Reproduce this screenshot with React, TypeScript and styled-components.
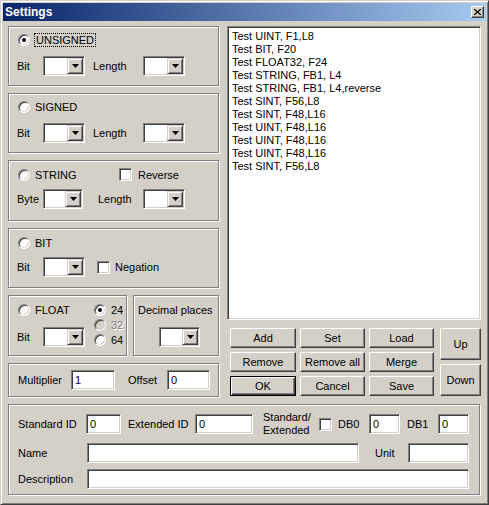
import React from "react";
import styled, { createGlobalStyle } from "styled-components";

const FACE = "#d4d0c8";
const SHADOW = "#808080";
const DARK = "#404040";

const GlobalStyle = createGlobalStyle`
  html, body {
    margin: 0;
    padding: 0;
    background: ${FACE};
  }
  body {
    font-family: "Liberation Sans", Arial, sans-serif;
    font-size: 11px;
    color: #000;
  }
  * {
    box-sizing: border-box;
  }
`;

const items = [
  "Test UINT, F1,L8",
  "Test BIT, F20",
  "Test FLOAT32, F24",
  "Test STRING, FB1, L4",
  "Test STRING, FB1, L4,reverse",
  "Test SINT, F56,L8",
  "Test SINT, F48,L16",
  "Test UINT, F48,L16",
  "Test UINT, F48,L16",
  "Test UINT, F48,L16",
  "Test SINT, F56,L8",
];

const Window = styled.div`
  width: 489px;
  height: 505px;
  background: ${FACE};
  border: 1px solid;
  border-color: ${FACE} ${DARK} ${DARK} ${FACE};
  box-shadow: inset 1px 1px #fff, inset -1px -1px ${SHADOW};
  padding: 2px;
  display: flex;
  flex-direction: column;
`;

const TitleBar = styled.div`
  height: 18px;
  flex-shrink: 0;
  background: linear-gradient(to right, #0a246a, #a6caf0);
  display: flex;
  align-items: center;
  justify-content: space-between;
  padding: 0 2px 0 2px;
  color: #fff;
  font-weight: bold;
  font-size: 12px;
`;

const CloseButton = styled.div`
  width: 13px;
  height: 12px;
  background: ${FACE};
  border: 1px solid;
  border-color: #fff ${DARK} ${DARK} #fff;
  box-shadow: inset -1px -1px ${SHADOW};
  display: flex;
  align-items: center;
  justify-content: center;
`;

const Body = styled.div`
  flex: 1;
  padding: 5px 5px 7px 5px;
  display: flex;
  flex-direction: column;
  gap: 7px;
`;

const TopRow = styled.div`
  display: flex;
  gap: 8px;
  height: 371px;
`;

const LeftCol = styled.div`
  width: 211px;
  display: flex;
  flex-direction: column;
  gap: 7px;
`;

const RightCol = styled.div`
  width: 254px;
  display: flex;
  flex-direction: column;
  gap: 8px;
`;

const Group = styled.div<{ $h: number; $w?: number }>`
  height: ${(p) => p.$h}px;
  width: ${(p) => (p.$w ? `${p.$w}px` : "auto")};
  flex-shrink: 0;
  border: 1px solid ${SHADOW};
  box-shadow: inset 1px 1px #fff, 1px 1px #fff;
  padding: 6px 0 0 8px;
  display: flex;
  flex-direction: column;
`;

const GroupRow = styled.div<{ $h?: number; $mt?: number }>`
  display: flex;
  align-items: center;
  height: ${(p) => p.$h ?? 14}px;
  margin-top: ${(p) => p.$mt ?? 0}px;
`;

const HRow = styled.div<{ $gap?: number }>`
  display: flex;
  gap: ${(p) => p.$gap ?? 0}px;
`;

const Label = styled.span<{ $w?: number; $ml?: number; $disabled?: boolean }>`
  display: inline-block;
  width: ${(p) => (p.$w ? `${p.$w}px` : "auto")};
  margin-left: ${(p) => p.$ml ?? 0}px;
  white-space: nowrap;
  flex-shrink: 0;
  color: ${(p) => (p.$disabled ? SHADOW : "#000")};
  text-shadow: ${(p) => (p.$disabled ? "1px 1px #fff" : "none")};
`;

const TwoLine = styled.span<{ $w: number; $ml: number }>`
  width: ${(p) => p.$w}px;
  margin-left: ${(p) => p.$ml}px;
  line-height: 13px;
  flex-shrink: 0;
`;

const Focus = styled.span`
  outline: 1px dotted #000;
  padding: 0 1px;
  line-height: 12px;
`;

const RadioCircle = styled.span<{ $checked?: boolean; $disabled?: boolean; $ml?: number }>`
  width: 12px;
  height: 12px;
  margin-left: ${(p) => p.$ml ?? 0}px;
  margin-right: 5px;
  flex-shrink: 0;
  border-radius: 50%;
  border: 1px solid;
  border-color: ${SHADOW} #fff #fff ${SHADOW};
  box-shadow: inset 1px 1px ${DARK}, inset -1px -1px ${FACE};
  background: ${(p) => (p.$disabled ? FACE : "#fff")};
  display: flex;
  align-items: center;
  justify-content: center;
  &::after {
    content: "";
    width: 4px;
    height: 4px;
    border-radius: 50%;
    background: #000;
    display: ${(p) => (p.$checked ? "block" : "none")};
  }
`;

const CheckBox = styled.span<{ $ml?: number }>`
  width: 13px;
  height: 13px;
  margin-left: ${(p) => p.$ml ?? 0}px;
  flex-shrink: 0;
  background: #fff;
  border: 1px solid;
  border-color: ${SHADOW} #fff #fff ${SHADOW};
  box-shadow: inset 1px 1px ${DARK}, inset -1px -1px ${FACE};
`;

const Field = styled.div<{ $w: number; $ml?: number }>`
  width: ${(p) => p.$w}px;
  height: 20px;
  margin-left: ${(p) => p.$ml ?? 0}px;
  flex-shrink: 0;
  background: #fff;
  border: 1px solid;
  border-color: ${SHADOW} #fff #fff ${SHADOW};
  box-shadow: inset 1px 1px ${DARK}, inset -1px -1px ${FACE};
  padding: 2px 2px 2px 3px;
  display: flex;
  align-items: center;
  justify-content: space-between;
`;

const DropButton = styled.span`
  width: 16px;
  height: 16px;
  margin-left: auto;
  margin-right: -1px;
  background: ${FACE};
  border: 1px solid;
  border-color: ${FACE} ${DARK} ${DARK} ${FACE};
  box-shadow: inset 1px 1px #fff, inset -1px -1px ${SHADOW};
  display: flex;
  align-items: center;
  justify-content: center;
`;

const ListBox = styled.div`
  height: 294px;
  background: #fff;
  border: 1px solid;
  border-color: ${SHADOW} #fff #fff ${SHADOW};
  box-shadow: inset 1px 1px ${DARK}, inset -1px -1px ${FACE};
  padding: 3px 3px 3px 4px;
  line-height: 13px;
  font-size: 11px;
`;

const ButtonArea = styled.div`
  display: flex;
  padding-left: 3px;
  gap: 6px;
`;

const ButtonGrid = styled.div`
  display: grid;
  grid-template-columns: 66px 65px 65px;
  grid-auto-rows: 20px;
  gap: 4px;
`;

const UpDown = styled.div`
  width: 41px;
  display: flex;
  flex-direction: column;
  gap: 4px;
`;

const Button = styled.div<{ $default?: boolean; $h?: number }>`
  height: ${(p) => p.$h ?? 20}px;
  background: ${FACE};
  border: 1px solid;
  border-color: ${(p) => (p.$default ? "#000" : `#fff ${DARK} ${DARK} #fff`)};
  box-shadow: ${(p) =>
    p.$default
      ? `inset 1px 1px #fff, inset -1px -1px ${DARK}, inset -2px -2px ${SHADOW}`
      : `inset -1px -1px ${SHADOW}`};
  display: flex;
  align-items: center;
  justify-content: center;
  font-size: 11px;
`;

const FloatLeft = styled.div`
  width: 77px;
  display: flex;
  flex-direction: column;
`;

const FloatRadios = styled.div`
  display: flex;
  flex-direction: column;
`;

const DecimalGroup = styled(Group)`
  padding-left: 4px;
`;

const InlineGroup = styled(Group)`
  flex-direction: row;
  align-items: center;
  padding: 0 0 0 9px;
`;

const BottomGroup = styled(Group)`
  padding: 9px 0 0 9px;
  margin-right: 1px;
`;

const Triangle = () => (
  <svg width="7" height="4" viewBox="0 0 7 4">
    <path d="M0 0h7L3.5 4z" fill="#000" />
  </svg>
);

const Combo = ({ w, ml }: { w: number; ml?: number }) => (
  <Field $w={w} $ml={ml}>
    <DropButton>
      <Triangle />
    </DropButton>
  </Field>
);

const TypeGroup = ({ title, focused }: { title: string; focused?: boolean }) => (
  <Group $h={60}>
    <GroupRow>
      <RadioCircle $ml={1} $checked={focused} />
      <Label>{focused ? <Focus>{title}</Focus> : title}</Label>
    </GroupRow>
    <GroupRow $h={20} $mt={9}>
      <Label $w={26}>Bit</Label>
      <Combo w={42} />
      <Label $w={50} $ml={8}>
        Length
      </Label>
      <Combo w={42} />
    </GroupRow>
  </Group>
);

export default function App() {
  return (
    <>
      <GlobalStyle />
      <Window>
        <TitleBar>
          <span>Settings</span>
          <CloseButton>
            <svg width="7" height="6" viewBox="0 0 7 6">
              <path d="M0 0L7 6M7 0L0 6" stroke="#000" strokeWidth="1.3" />
            </svg>
          </CloseButton>
        </TitleBar>
        <Body>
          <TopRow>
            <LeftCol>
              <TypeGroup title="UNSIGNED" focused />
              <TypeGroup title="SIGNED" />
              <Group $h={61}>
                <GroupRow $h={15}>
                  <RadioCircle $ml={1} />
                  <Label $w={84}>STRING</Label>
                  <CheckBox />
                  <Label $ml={6}>Reverse</Label>
                </GroupRow>
                <GroupRow $h={20} $mt={7}>
                  <Label $w={26}>Byte</Label>
                  <Combo w={40} />
                  <Label $w={45} $ml={15}>
                    Length
                  </Label>
                  <Combo w={42} />
                </GroupRow>
              </Group>
              <Group $h={60}>
                <GroupRow $h={16}>
                  <RadioCircle $ml={1} />
                  <Label>BIT</Label>
                </GroupRow>
                <GroupRow $h={20} $mt={6}>
                  <Label $w={26}>Bit</Label>
                  <Combo w={42} />
                  <CheckBox $ml={12} />
                  <Label $ml={5}>Negation</Label>
                </GroupRow>
              </Group>
              <HRow $gap={6}>
                <Group $h={61} $w={119}>
                  <HRow>
                    <FloatLeft>
                      <GroupRow $h={16}>
                        <RadioCircle $ml={1} />
                        <Label>FLOAT</Label>
                      </GroupRow>
                      <GroupRow $h={20} $mt={9}>
                        <Label $w={26}>Bit</Label>
                        <Combo w={42} />
                      </GroupRow>
                    </FloatLeft>
                    <FloatRadios>
                      <GroupRow $h={16}>
                        <RadioCircle $checked />
                        <Label>24</Label>
                      </GroupRow>
                      <GroupRow $h={14}>
                        <RadioCircle $disabled />
                        <Label $disabled>32</Label>
                      </GroupRow>
                      <GroupRow $h={16}>
                        <RadioCircle />
                        <Label>64</Label>
                      </GroupRow>
                    </FloatRadios>
                  </HRow>
                </Group>
                <DecimalGroup $h={61} $w={86}>
                  <GroupRow $h={16}>
                    <Label>Decimal places</Label>
                  </GroupRow>
                  <GroupRow $h={20} $mt={9}>
                    <Combo w={41} ml={21} />
                  </GroupRow>
                </DecimalGroup>
              </HRow>
              <InlineGroup $h={34}>
                <Label $w={53}>Multiplier</Label>
                <Field $w={44}>1</Field>
                <Label $w={39} $ml={13}>
                  Offset
                </Label>
                <Field $w={43}>0</Field>
              </InlineGroup>
            </LeftCol>
            <RightCol>
              <ListBox>
                {items.map((item, i) => (
                  <div key={i}>{item}</div>
                ))}
              </ListBox>
              <ButtonArea>
                <ButtonGrid>
                  <Button>Add</Button>
                  <Button>Set</Button>
                  <Button>Load</Button>
                  <Button>Remove</Button>
                  <Button>Remove all</Button>
                  <Button>Merge</Button>
                  <Button $default>OK</Button>
                  <Button>Cancel</Button>
                  <Button>Save</Button>
                </ButtonGrid>
                <UpDown>
                  <Button $h={32}>Up</Button>
                  <Button $h={32}>Down</Button>
                </UpDown>
              </ButtonArea>
            </RightCol>
          </TopRow>
          <BottomGroup $h={91}>
            <GroupRow $h={20}>
              <Label $w={68}>Standard ID</Label>
              <Field $w={35}>0</Field>
              <Label $w={67} $ml={7}>
                Extended ID
              </Label>
              <Field $w={58}>0</Field>
              <TwoLine $w={56} $ml={10}>
                Standard/
                <br />
                Extended
              </TwoLine>
              <CheckBox />
              <Label $w={31} $ml={6}>
                DB0
              </Label>
              <Field $w={31}>0</Field>
              <Label $w={31} $ml={7}>
                DB1
              </Label>
              <Field $w={31}>0</Field>
            </GroupRow>
            <GroupRow $h={20} $mt={9}>
              <Label $w={69}>Name</Label>
              <Field $w={272} />
              <Label $w={33} $ml={16}>
                Unit
              </Label>
              <Field $w={61} />
            </GroupRow>
            <GroupRow $h={20} $mt={6}>
              <Label $w={69}>Description</Label>
              <Field $w={382} />
            </GroupRow>
          </BottomGroup>
        </Body>
      </Window>
    </>
  );
}
